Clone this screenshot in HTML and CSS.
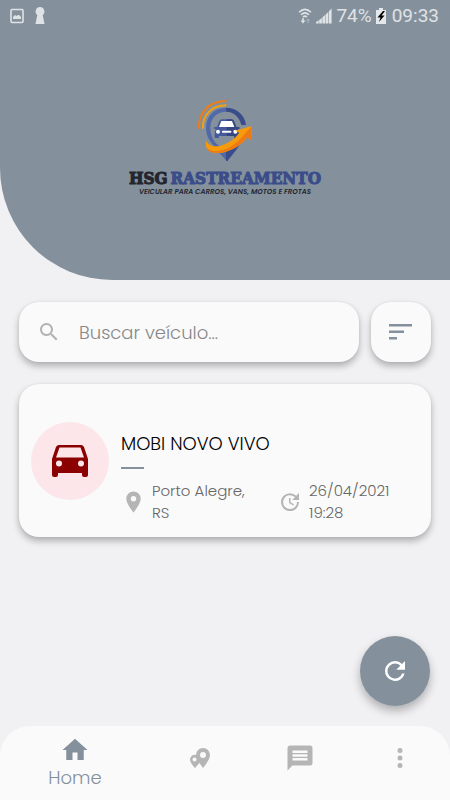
FILE: index.html
```html
<!DOCTYPE html>
<html lang="pt-BR">
<head>
<meta charset="utf-8">
<meta name="viewport" content="width=device-width, initial-scale=1">
<title>HSG Rastreamento</title>
<link rel="stylesheet" href="styles.css">
</head>
<body>
<header class="hero">
  <div class="status">
    <svg width="16" height="16" viewBox="0 0 16 16"><rect x="2" y="1.500" width="12" height="13" rx="1" fill="none" stroke="currentColor" stroke-width="1.600"/><path d="M4 11V9l2-2 1.500 1L9 7h1l2 2v2z" fill="currentColor"/></svg>
    <svg class="status-key" width="12" height="18" viewBox="0 0 12 18"><path d="M6 0a4.500 4.500 0 0 1 2.700 8L10.500 17h-9L3.300 8A4.500 4.500 0 0 1 6 0z" fill="currentColor"/></svg>
    <span class="status-gap"></span>
    <svg width="14" height="16" viewBox="0 0 14 16" fill="none" stroke="currentColor" stroke-width="1.500"><path d="M1 4.200Q7-1.500 13 4.200M3 6.700Q7 3 11 6.700M5 9Q7 7.200 9 9"/><path d="M5 10v3" /><path d="M2.500 12.500h5L5 15.500z" fill="currentColor" stroke="none"/><path d="M10 15v-3M8.500 12.500L10 11l1.500 1.500" stroke-width="1" opacity=".5"/></svg>
    <svg width="16" height="16" viewBox="0 0 16 16" fill="currentColor"><path d="M0 15.500v-1.500l2.700-1.700v3.200zM3.200 15.500V12l2.700-2v5.500zM6.400 15.500V9.300l2.700-2.300v8.500zM9.600 15.500V6.500l2.700-2.500v11.500zM12.900 15.500V3.200L15.600.5v15z"/></svg>
    <span class="status-text">74%</span>
    <svg class="status-battery" width="10" height="16" viewBox="0 0 10 16"><path d="M3 0h4v2h3v14H0V2h3z" fill="#e4e8eb"/><path d="M7 3L1.500 9.500h3L3 14l5.500-6.500h-3L9 3z" fill="#000"/></svg>
    <span class="status-text">09:33</span>
  </div>
  <div class="logo">
    <svg width="70" height="70" viewBox="0 0 210 210" aria-hidden="true">
      <path d="M108 38C72 38 48 64 48 98c0 24 10 40 24 54l40 46v-36C82 158 61 132 61 98c0-28 20-48 47-48z" fill="#5269a8"/>
      <path d="M108 38c32 0 57 22 60 52h-14c-4-22-22-40-46-40z" fill="#3a4c89"/>
      <path d="M108 162c22-4 34-12 44-20-8 20-24 36-40 56h-4z" fill="#3a4c89"/>
      <path d="M66 150q20 14 42 8v38z" fill="#5269a8"/>
      <path d="M27 101C24 52 58 18 109 18" fill="none" stroke="#ed7d16" stroke-width="6"/>
      <path d="M39 101C36 60 66 31 109 31" fill="none" stroke="#f8a00c" stroke-width="6"/>
      <path d="M70 100q2-5 11-4l7-18q2-5 8-5h28q6 0 8 5l7 18q9-1 11 4l-8 3q4 5 4 10v16h-13v-6H87v6H74v-16q0-5 4-10z" fill="#445a9b"/>
      <path d="M110 73h14q6 0 8 5l7 18q9-1 11 4l-8 3q4 5 4 10v16h-13v-6h-23z" fill="#344783"/>
      <path d="M94 78h32l7 18H87z" fill="#fff"/>
      <circle cx="84" cy="110" r="6" fill="#fff"/><circle cx="136" cy="110" r="6" fill="#fff"/><rect x="96" y="107" width="28" height="6" rx="2" fill="#fff"/>
      <path d="M48 137c10 18 32 22 58 10 18-8 32-20 42-34l-12-6 50-14-3 42-11-8c-18 22-42 40-76 46-32 6-54-8-48-36z" fill="#f79a0c"/>
      <path d="M50 158c14 14 42 12 64 2 22-12 40-28 54-48l18-19-3 42-11-8c-18 22-42 40-76 46-24 4-42-2-46-15z" fill="#ec7b16"/>
    </svg>
    <div class="logo-name"><span class="logo-dark">HSG</span><span>RASTREAMENTO</span></div>
    <div class="logo-tag">VEICULAR PARA CARROS, VANS, MOTOS E FROTAS</div>
  </div>
</header>
<main class="content">
  <form class="search-row">
    <label class="search surface">
      <svg width="24" height="24" viewBox="0 0 24 24" fill="currentColor"><path d="M15.500 14h-.79l-.28-.27A6.500 6.500 0 1 0 13.730 14.430l.27.280v.79l5 4.990L20.490 19zm-6 0a4.500 4.500 0 1 1 0-9 4.500 4.500 0 0 1 0 9z"/></svg>
      <input class="search-input" type="text" placeholder="Buscar veículo..." aria-label="Buscar veículo">
    </label>
    <button class="filter surface" type="button" aria-label="Ordenar">
      <svg width="24" height="16" viewBox="0 0 24 16" fill="currentColor"><path d="M0 0h23v2.500H0zM0 6.500h15V9H0zM0 13h8v2.500H0z"/></svg>
    </button>
  </form>
  <article class="vehicle surface">
    <div class="avatar">
      <svg width="36" height="32" viewBox="0 0 36 32"><path fill="#8b0000" fill-rule="evenodd" d="M7 0h22q2 0 3 2l4 12v16q0 2-2 2h-2q-2 0-2-2v-2H6v2q0 2-2 2H2q-2 0-2-2V14L4 2q1-2 3-2zM7.500 2.500L4 12.500h28L28.500 2.500zM7 15.500a3 3 0 1 0 0 6 3 3 0 0 0 0-6zM29 15.500a3 3 0 1 0 0 6 3 3 0 0 0 0-6z"/></svg>
    </div>
    <div class="details">
      <h2 class="vehicle-name">MOBI NOVO VIVO</h2>
      <div class="rule"></div>
      <div class="facts">
        <div class="fact place">
          <svg width="24" height="24" viewBox="0 0 24 24" fill="currentColor"><path d="M12.500 1.500A7.200 7.200 0 0 0 5.300 8.700C5.300 14 12.500 22.500 12.500 22.500s7.200-8.500 7.200-13.800A7.200 7.200 0 0 0 12.500 1.500zm0 10a2.700 2.700 0 1 1 0-5.400 2.700 2.700 0 0 1 0 5.400z"/></svg>
          <span>Porto Alegre, RS</span>
        </div>
        <div class="fact time">
          <svg width="24" height="24" viewBox="0 0 24 24" fill="currentColor"><path d="M21 10.120h-6.780l2.740-2.820c-2.730-2.700-7.150-2.800-9.880-.1a6.875 6.875 0 0 0 0 9.790 7.020 7.020 0 0 0 9.880 0C18.320 15.650 19 14.080 19 12.100h2c0 1.980-.88 4.550-2.640 6.290-3.510 3.480-9.210 3.480-12.720 0-3.500-3.470-3.530-9.110-.02-12.580a8.987 8.987 0 0 1 12.650 0L21 3zM12.500 8v4.250l3.500 2.080-.72 1.210L11 13V8z"/></svg>
          <span>26/04/2021 19:28</span>
        </div>
      </div>
    </div>
  </article>
</main>
<button class="refresh" type="button" aria-label="Atualizar">
  <svg width="30" height="30" viewBox="0 0 24 24" fill="currentColor"><path d="M17.650 6.350A7.958 7.958 0 0 0 12 4a8 8 0 1 0 7.730 10h-2.080A6 6 0 1 1 12 6c1.660 0 3.140.690 4.220 1.780L13 11h7V4z"/></svg>
</button>
<nav class="tabs">
  <a class="tab active" href="#home">
    <svg width="30" height="30" viewBox="0 0 24 24" fill="currentColor"><path d="M10 20v-6h4v6h5v-8h3L12 3 2 12h3v8z"/></svg>
    <span>Home</span>
  </a>
  <a class="tab" href="#mapa" aria-label="Mapa">
    <svg width="22" height="22" viewBox="0 0 22 22" fill="currentColor" fill-rule="evenodd"><path d="M14 1a7 7 0 0 1 7 7c0 5-7 13-7 13l-3.500-5L6 21S1 16 1 12.500a4.700 4.700 0 0 1 6-4.500A7 7 0 0 1 14 1zm0 4a3 3 0 1 0 0 6 3 3 0 0 0 0-6zM5.500 10.500a2 2 0 1 0 0 4 2 2 0 0 0 0-4z"/></svg>
  </a>
  <a class="tab" href="#mensagens" aria-label="Mensagens">
    <svg width="30" height="30" viewBox="0 0 24 24" fill="currentColor"><path d="M20 2H4a2 2 0 0 0-1.990 2L2 22l4-4h14a2 2 0 0 0 2-2V4a2 2 0 0 0-2-2zm-2 12H6v-2h12zm0-3H6V9h12zm0-3H6V6h12z"/></svg>
  </a>
  <a class="tab" href="#mais" aria-label="Mais">
    <svg width="30" height="30" viewBox="0 0 24 24" fill="currentColor"><path d="M12 8a2 2 0 1 0 0-4 2 2 0 0 0 0 4zm0 2a2 2 0 1 0 0 4 2 2 0 0 0 0-4zm0 6a2 2 0 1 0 0 4 2 2 0 0 0 0-4z"/></svg>
  </a>
</nav>
</body>
</html>
```
FILE: styles.css
```css
* { box-sizing: border-box; }
body {
  margin: 0;
  min-height: 100vh;
  display: flex;
  flex-direction: column;
  background: #f1f1f4;
  font-family: Poppins, Inter, "Liberation Sans", sans-serif;
  font-weight: 300;
}
svg { display: block; flex: none; }
button { border: 0; padding: 0; cursor: pointer; }
.hero {
  background: #84919c;
  border-bottom-left-radius: 112px;
  padding-bottom: 84px;
}
.status {
  display: flex;
  align-items: center;
  height: 32px;
  padding: 0 11px 0 9px;
  gap: 4px;
  color: #dfe3e6;
}
.status-key { margin-left: 5px; }
.status-gap { flex: 1; }
.status-text { font: 400 19px/32px Roboto, sans-serif; }
.status-battery { margin-right: 2px; }
.logo {
  display: flex;
  flex-direction: column;
  align-items: center;
  padding-top: 63px;
}
.logo-name {
  display: flex;
  gap: 3px;
  margin-top: 3px;
  font: 700 17px/20px "DejaVu Serif Condensed", "DejaVu Serif", serif;
  white-space: nowrap;
  color: #3a4c89;
  -webkit-text-stroke: 1px currentColor;
}
.logo-dark { color: #23252f; }
.logo-tag {
  font: italic 600 7px/8px Poppins, Inter, sans-serif;
  color: #23252f;
  white-space: nowrap;
}
.content { padding: 22px 19px 24px; }
.surface {
  background: #fafafa;
  border-radius: 20px;
  box-shadow: 0 4px 7px rgba(0, 0, 0, .28), 0 0 2px rgba(0, 0, 0, .08);
}
.search-row { display: flex; gap: 12px; margin: 0 0 22px; }
.search {
  flex: 1;
  min-width: 0;
  display: flex;
  align-items: center;
  gap: 18px;
  height: 60px;
  padding: 0 18px;
  color: #b3b3b3;
}
.search-input {
  flex: 1;
  min-width: 0;
  border: 0;
  padding: 0;
  outline: 0;
  background: none;
  font: inherit;
  font-size: 18px;
  color: #333;
}
.search-input::placeholder { color: #888; opacity: 1; }
.filter {
  width: 60px;
  height: 60px;
  display: grid;
  place-items: center;
  color: #84919c;
}
.vehicle {
  display: flex;
  gap: 12px;
  padding: 38px 12px 13px;
}
.avatar {
  flex: none;
  width: 78px;
  height: 78px;
  border-radius: 50%;
  background: #fce6e9;
  display: grid;
  place-items: center;
}
.details { flex: 1; min-width: 0; padding-top: 9px; }
.vehicle-name {
  margin: 0;
  font-size: 18px;
  line-height: 26px;
  font-weight: 300;
  color: #000;
}
.rule { width: 23px; height: 2px; margin: 10px 0 11px; background: #84919c; }
.facts { display: flex; gap: 20px; }
.fact {
  display: flex;
  align-items: center;
  gap: 7px;
  font-size: 15px;
  line-height: 22px;
  color: #666;
}
.fact svg { color: #b5b5b5; }
.place { width: 137px; }
.time { flex: 1; min-width: 0; }
.fact span { max-width: 98px; }
.refresh {
  position: fixed;
  right: 20px;
  bottom: 94px;
  width: 70px;
  height: 70px;
  border-radius: 50%;
  display: grid;
  place-items: center;
  background: #84919c;
  color: #fff;
  box-shadow: 0 5px 10px rgba(0, 0, 0, .28);
}
.tabs {
  margin-top: auto;
  display: flex;
  height: 74px;
  padding-bottom: 10px;
  background: #fafafa;
  border-radius: 30px 30px 0 0;
}
.tab {
  flex: 2;
  display: flex;
  flex-direction: column;
  align-items: center;
  justify-content: center;
  color: #b5b5b5;
  text-decoration: none;
}
.active {
  flex: 3;
  justify-content: flex-start;
  padding-top: 9px;
  color: #84919c;
  font-size: 18px;
  line-height: 26px;
}
```
